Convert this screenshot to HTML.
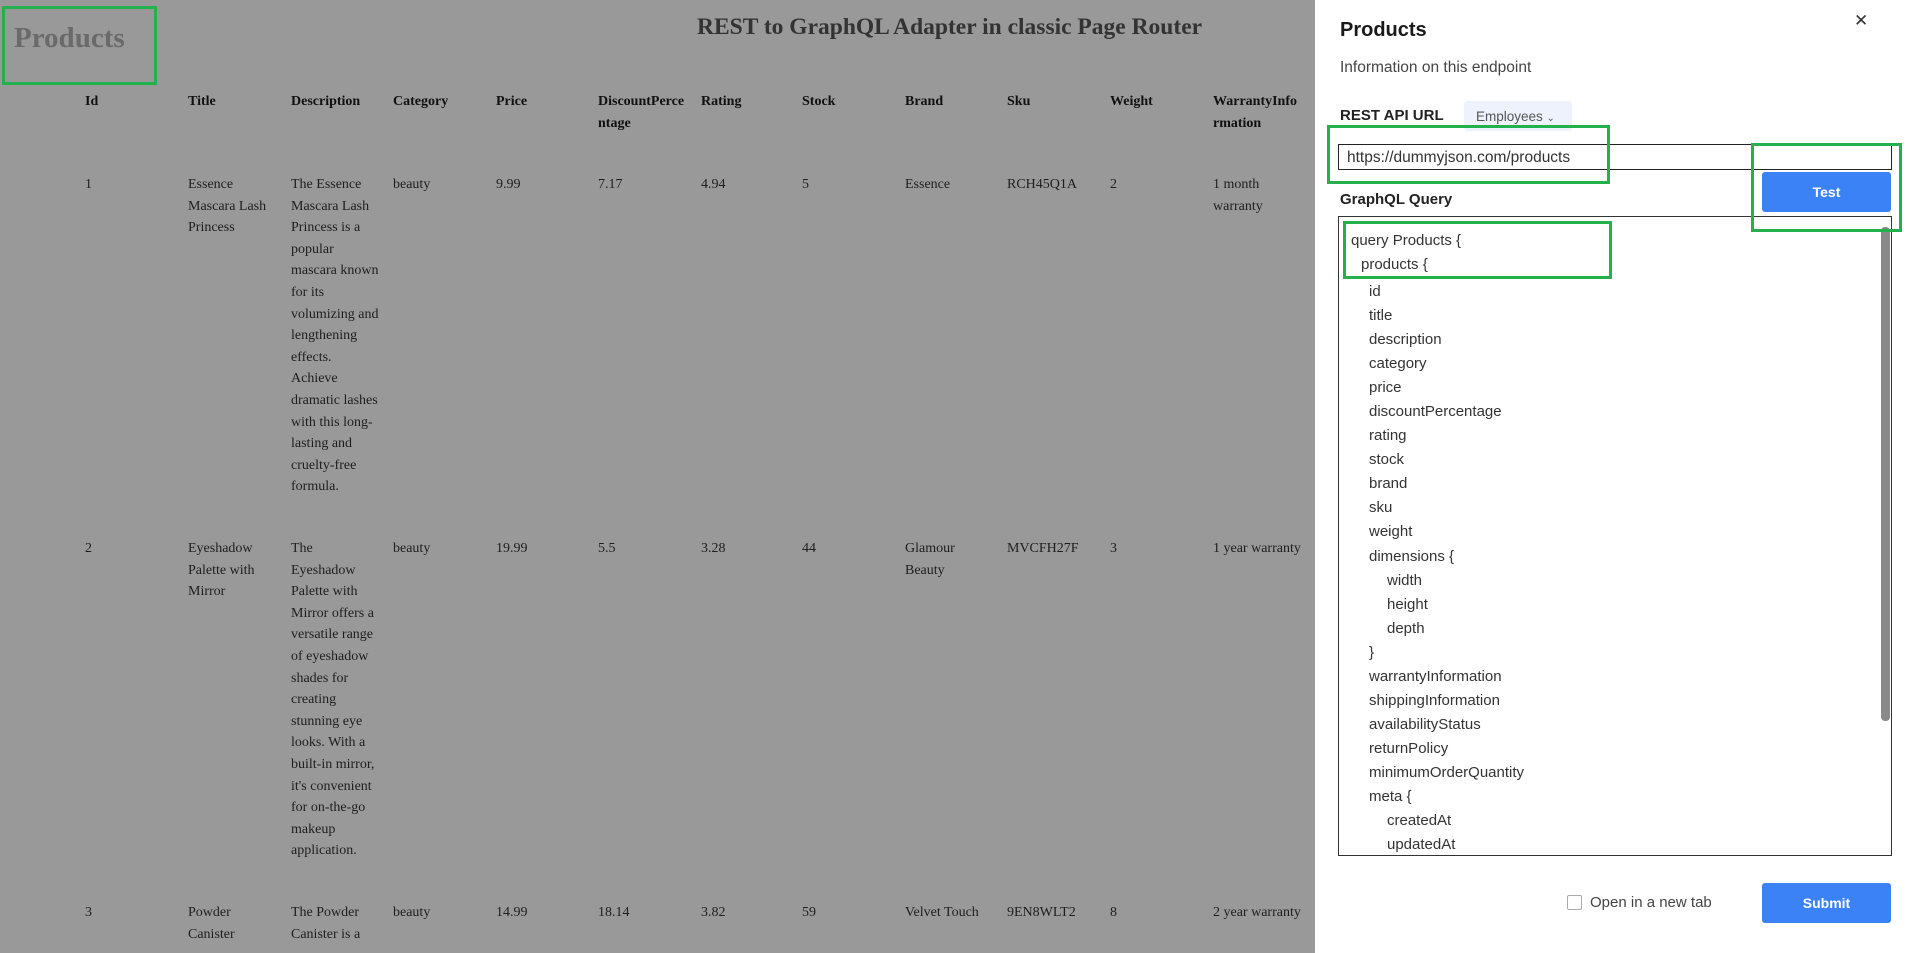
<!DOCTYPE html>
<html><head><meta charset="utf-8"><style>
*{margin:0;padding:0;box-sizing:border-box}
body{width:1915px;height:953px;overflow:hidden;background:#999;position:relative;font-family:"Liberation Serif",serif;color:#1a1a1a}
.a{position:absolute}
.c{position:absolute;font-size:14px;line-height:21.6px;white-space:nowrap;color:#1e1e1e}
.h{font-weight:bold;color:#111}
.g{position:absolute;border:3px solid #22b14c}
#p{position:absolute;left:1315px;top:0;width:600px;height:953px;background:#fff;font-family:"Liberation Sans",sans-serif;color:#222}
.q{position:absolute;font-size:15px;color:#333;white-space:nowrap}
</style></head><body>
<div class="a" style="left:14px;top:22px;font-size:29px;font-weight:bold;color:#6a6a6a">Products</div>
<div class="a" style="left:697px;top:14px;font-size:23.5px;font-weight:bold;color:#333;white-space:nowrap">REST to GraphQL Adapter in classic Page Router</div>
<div class="g" style="left:2px;top:6px;width:155px;height:79px"></div>

<div class="c h" style="left:85px;top:91px">Id</div>
<div class="c h" style="left:188px;top:91px">Title</div>
<div class="c h" style="left:291px;top:91px">Description</div>
<div class="c h" style="left:393px;top:91px">Category</div>
<div class="c h" style="left:496px;top:91px">Price</div>
<div class="c h" style="left:598px;top:91px">DiscountPerce<br>ntage</div>
<div class="c h" style="left:701px;top:91px">Rating</div>
<div class="c h" style="left:802px;top:91px">Stock</div>
<div class="c h" style="left:905px;top:91px">Brand</div>
<div class="c h" style="left:1007px;top:91px">Sku</div>
<div class="c h" style="left:1110px;top:91px">Weight</div>
<div class="c h" style="left:1213px;top:91px">WarrantyInfo<br>rmation</div>

<div class="c" style="left:85px;top:174px">1</div>
<div class="c" style="left:188px;top:174px">Essence<br>Mascara Lash<br>Princess</div>
<div class="c" style="left:291px;top:174px">The Essence<br>Mascara Lash<br>Princess is a<br>popular<br>mascara known<br>for its<br>volumizing and<br>lengthening<br>effects.<br>Achieve<br>dramatic lashes<br>with this long-<br>lasting and<br>cruelty-free<br>formula.</div>
<div class="c" style="left:393px;top:174px">beauty</div>
<div class="c" style="left:496px;top:174px">9.99</div>
<div class="c" style="left:598px;top:174px">7.17</div>
<div class="c" style="left:701px;top:174px">4.94</div>
<div class="c" style="left:802px;top:174px">5</div>
<div class="c" style="left:905px;top:174px">Essence</div>
<div class="c" style="left:1007px;top:174px">RCH45Q1A</div>
<div class="c" style="left:1110px;top:174px">2</div>
<div class="c" style="left:1213px;top:174px">1 month<br>warranty</div>

<div class="c" style="left:85px;top:538px">2</div>
<div class="c" style="left:188px;top:538px">Eyeshadow<br>Palette with<br>Mirror</div>
<div class="c" style="left:291px;top:538px">The<br>Eyeshadow<br>Palette with<br>Mirror offers a<br>versatile range<br>of eyeshadow<br>shades for<br>creating<br>stunning eye<br>looks. With a<br>built-in mirror,<br>it's convenient<br>for on-the-go<br>makeup<br>application.</div>
<div class="c" style="left:393px;top:538px">beauty</div>
<div class="c" style="left:496px;top:538px">19.99</div>
<div class="c" style="left:598px;top:538px">5.5</div>
<div class="c" style="left:701px;top:538px">3.28</div>
<div class="c" style="left:802px;top:538px">44</div>
<div class="c" style="left:905px;top:538px">Glamour<br>Beauty</div>
<div class="c" style="left:1007px;top:538px">MVCFH27F</div>
<div class="c" style="left:1110px;top:538px">3</div>
<div class="c" style="left:1213px;top:538px">1 year warranty</div>

<div class="c" style="left:85px;top:902px">3</div>
<div class="c" style="left:188px;top:902px">Powder<br>Canister</div>
<div class="c" style="left:291px;top:902px">The Powder<br>Canister is a</div>
<div class="c" style="left:393px;top:902px">beauty</div>
<div class="c" style="left:496px;top:902px">14.99</div>
<div class="c" style="left:598px;top:902px">18.14</div>
<div class="c" style="left:701px;top:902px">3.82</div>
<div class="c" style="left:802px;top:902px">59</div>
<div class="c" style="left:905px;top:902px">Velvet Touch</div>
<div class="c" style="left:1007px;top:902px">9EN8WLT2</div>
<div class="c" style="left:1110px;top:902px">8</div>
<div class="c" style="left:1213px;top:902px">2 year warranty</div>

<div id="p">
<div class="a" style="left:25px;top:19px;font-size:20px;font-weight:bold;color:#1a1a1a">Products</div>
<div class="a" style="left:539px;top:11px;font-size:17px;color:#333">✕</div>
<div class="a" style="left:25px;top:59px;font-size:15.5px;color:#444">Information on this endpoint</div>
<div class="a" style="left:25px;top:107px;font-size:15px;font-weight:bold;color:#222">REST API URL</div>
<div class="a" style="left:149px;top:101px;width:108px;height:30px;background:#eef2fc;border-radius:3px;font-size:13.5px;color:#555;padding:8px 0 0 12px">Employees <span style="font-size:10px">&#8964;</span></div>
<div class="a" style="left:23px;top:144px;width:554px;height:26px;border:1px solid #222;font-size:15.5px;padding:4px 8px;color:#333">https://dummyjson.com/products</div>
<div class="a" style="left:447px;top:172px;width:129px;height:40px;background:#3b82f6;border-radius:3px;color:#fff;font-weight:bold;font-size:14px;text-align:center;line-height:40px">Test</div>
<div class="a" style="left:25px;top:191px;font-size:15px;font-weight:bold;color:#222">GraphQL Query</div>
<div class="a" style="left:23px;top:216px;width:554px;height:640px;border:1px solid #333;overflow:hidden">
<div class="a" style="right:1px;top:10px;width:9px;height:494px;background:#8a8a8a;border-radius:4px"></div>
</div>
<div class="q" style="left:36px;top:232px">query Products {</div>
<div class="q" style="left:46px;top:256px">products {</div>
<div class="q" style="left:54px;top:280px;line-height:24.05px">id<br>title<br>description<br>category<br>price<br>discountPercentage<br>rating<br>stock<br>brand<br>sku<br>weight<br>dimensions {<br><span style="padding-left:18px">width</span><br><span style="padding-left:18px">height</span><br><span style="padding-left:18px">depth</span><br>}<br>warrantyInformation<br>shippingInformation<br>availabilityStatus<br>returnPolicy<br>minimumOrderQuantity<br>meta {<br><span style="padding-left:18px">createdAt</span><br><span style="padding-left:18px">updatedAt</span></div>
<div class="a" style="left:252px;top:895px;width:15px;height:15px;border:1px solid #aaa;border-radius:2px"></div>
<div class="a" style="left:275px;top:894px;font-size:15px;color:#444">Open in a new tab</div>
<div class="a" style="left:447px;top:883px;width:129px;height:40px;background:#3b82f6;border-radius:3px;color:#fff;font-weight:bold;font-size:14px;text-align:center;line-height:40px">Submit</div>
</div>
<div class="g" style="left:1327px;top:125px;width:283px;height:59px"></div>
<div class="g" style="left:1751px;top:143px;width:151px;height:89px"></div>
<div class="g" style="left:1343px;top:221px;width:269px;height:58px"></div>
</body></html>
